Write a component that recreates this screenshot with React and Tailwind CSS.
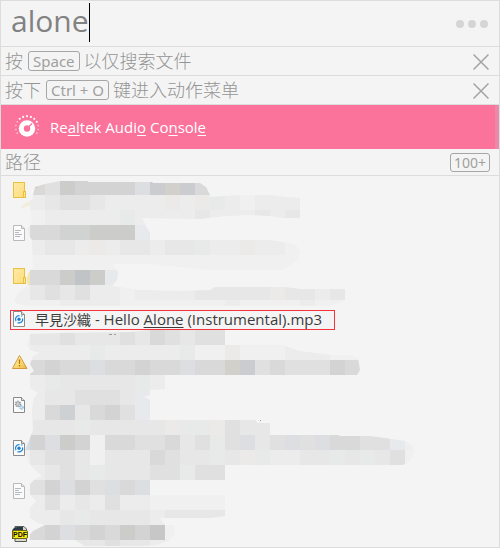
import React from "react";

const SHADES = {
  a: "#f0f0f0",
  b: "#ececec",
  c: "#e7e7e7",
  d: "#e0e0e0",
  e: "#d9d9d9",
  f: "#d3d3d3",
  g: "#cccccb",
  h: "#c7c7c8",
  B: "#e7eae9",
  W: "#ebeae8",
  P: "#dcdee1",
  Q: "#e7e9ec",
  M: "#d0d3d1",
  L: "#cacccf",
  N: "#c1c4c7",
  Y: "#d2d0cb",
  S: "#cdd1d4",
};

const CELL = 15;

// One entry per band of 15px tiles: [top, shades from x = 30]
const TILES = [
  [180, "edgffffPLYLe"],
  [195, "bcddcbbbbWbWBbabbb"],
  [210, "abbbbbBbbbbcbbbcbc"],
  [225, "eeMMgggQ"],
  [240, "bccbWbccbccBbbWbba"],
  [255, "aaaaaaaaaaaaaaaaaa"],
  [270, "eegNgQaa"],
  [285, "cdcdbbabbbbcccccWccbc"],
  [300, "aabbbbaaaaaaabaaaabaa"],
  [330, "ccdcccdcedcdd"],
  [345, "bbbbBbbbbbBaaWaaabbbaa"],
  [360, "efeePeefeePeeYLdedddfe"],
  [375, "bBcccccBbaaaa"],
  [390, "bccdddcQ"],
  [405, "beScefdQ"],
  [420, "cccBcccccWBBWdcc"],
  [435, "fPgfaeeddecdBdPcdPdPeeddQ"],
  [450, "cddcacccedccBcWBbbccBcBcda"],
  [465, "bcdcBcccddBdd"],
  [480, "dfPfdPePa"],
  [495, "bdbcbdbbaaaaa"],
  [510, "bbcBccccbcccc"],
  [525, "efPefegfha"],
  [540, "aaaccdccbb"],
];

// Outlines of the brushed areas
const STROKES = [
  "M33 195 35 187 45 184 60 181 88 181 88 182 152 182 153 183 200 183 206 187 210 195 210 197 240 195 270 195 285 197 300 198 300 218 283 218 270 216 250 215 225 216 200 219 142 218 146 226 150 233 150 240 269 240 283 242 296 245 300 252 298 260 286 268 280 270 210 270 150 264 112 264 118 272 117 280 112 286 120 287 138 290 180 291 210 290 215 287 285 287 300 289 345 289 345 300 330 306 30 306 17 304 14 300 18 293 28 285 26 280 29 272 33 267 32 240 28 234 27 228 32 224 30 205 21 209 22 205 33 199Z",
  "M30 334 60 333 130 332 150 330 225 330 225 345 281 345 300 351 330 355 350 355 358 358 360 370 357 375 165 375 165 389 150 390 150 395 144 397 150 400 150 420 255 420 257 423 270 423 270 435 338 435 340 436 370 436 385 438 405 441 412 445 415 452 410 461 403 465 225 465 225 480 150 480 150 495 225 495 225 516 210 518 160 518 165 525 174 525 175 534 170 540 157 545 140 546 85 546 75 540 30 540 28 537 33 531 45 525 38 523 30 518 30 508 36 501 30 494 30 484 35 479 42 476 33 468 27 461 25 450 30 438 33 430 32 410 34 398 38 393 30 388 30 374 34 371 30 364 33 356 40 353 30 350 27 345Z",
];

function Mosaic() {
  return (
    <svg
      className="pointer-events-none absolute left-0 top-0"
      width="420"
      height="371"
      viewBox="1 176 420 371"
      shapeRendering="crispEdges"
      aria-hidden="true"
    >
      <clipPath id="brushed">
        {STROKES.map((d) => (
          <path key={d} d={d} />
        ))}
      </clipPath>
      <g clipPath="url(#brushed)">
        <path d={STROKES.join("")} fill="#efefef" />
        {TILES.map(([y, shades]) =>
          shades
            .split("")
            .map((s, i) => (
              <rect key={`${y}-${i}`} x={30 + i * CELL} y={y} width={CELL} height={CELL} fill={SHADES[s]} />
            ))
        )}
        <path d="M21 209 22 205 30 201V209Z" fill="#f2eedb" />
        <path d="M26 272H30V285H27Z" fill="#f6e6ae" />
        <path d="M25 450 30 437V450Z" fill="#d3dee8" />
      </g>
      <path d="M36 187h1v1h-1z" fill="#f2a46c" />
      <path d="M109 334h3v1h-3zM114 334h2v1h-2zM260 420h1v1h-1z" fill="#9a9a9a" />
    </svg>
  );
}

function FolderIcon() {
  return (
    <svg width="16" height="16" viewBox="0 0 16 16" aria-hidden="true">
      <defs>
        <linearGradient id="folder" x1="0" y1="0" x2="1" y2="1">
          <stop offset="0" stopColor="#ffeaa6" />
          <stop offset="1" stopColor="#fddc7c" />
        </linearGradient>
      </defs>
      <rect x="1.5" y=".5" width="11" height="15" fill="url(#folder)" stroke="#e8c140" />
      <rect x="11.5" y="9.500" width="2" height="6" fill="#ffe28a" stroke="#e8c140" />
    </svg>
  );
}

function Page({ stroke = "#8a8a8a", children }) {
  return (
    <svg width="16" height="16" viewBox="0 0 16 16" aria-hidden="true">
      <path d="M1.5.5H9.500L12.500 3.500V15.500H1.500Z" fill="#fbfbfb" stroke={stroke} />
      <path d="M9.500.5V3.500H12.500" fill="#e4e4e4" stroke={stroke} />
      {children}
    </svg>
  );
}

function TextIcon() {
  return (
    <Page stroke="#b9b9bb">
      <path d="M3 5.500H9M3 7.500H7M3 9.500H10M3 11.500H8" stroke="#b4b8bf" />
    </Page>
  );
}

function MediaIcon() {
  return (
    <Page>
      <path d="M7.500 4.600A3.700 3.700 0 0 0 4 10.200M5.500 11.600A3.700 3.700 0 0 0 10.600 7.300" fill="none" stroke="#1a84dc" strokeWidth="1.200" />
      <circle cx="7" cy="8.300" r="1.700" fill="#1a7fd8" />
      <path d="M9 5.200 10.500 4.800" stroke="#1a84dc" />
    </Page>
  );
}

function GearIcon() {
  return (
    <Page>
      <circle cx="6" cy="7" r="2.400" fill="#eee" stroke="#8e979e" strokeWidth="1.800" strokeDasharray="1.300 .6" />
      <circle cx="6" cy="7" r="1.100" fill="#fff" stroke="#8e979e" strokeWidth=".6" />
      <circle cx="9.500" cy="10.500" r="1.600" fill="#dceef9" stroke="#85b8d8" strokeWidth="1.400" strokeDasharray="1.100 .5" />
    </Page>
  );
}

function WarningIcon() {
  return (
    <svg width="16" height="16" viewBox="0 0 16 16" aria-hidden="true">
      <defs>
        <linearGradient id="warn" x1="0" y1="0" x2="1" y2="1">
          <stop offset="0" stopColor="#fff6c4" />
          <stop offset=".6" stopColor="#f9d869" />
          <stop offset="1" stopColor="#edb04a" />
        </linearGradient>
      </defs>
      <path d="M7.500 1.500 15 14.500H.5Z" fill="url(#warn)" stroke="#d39a3c" strokeLinejoin="round" />
      <path d="M6.700 5.500H8.300L8 10H7ZM6.800 11H8.200V12.600H6.800Z" fill="#b5761c" />
    </svg>
  );
}

function PdfIcon() {
  return (
    <svg width="16" height="16" viewBox="0 0 16 16" aria-hidden="true">
      <path d="M3 .5H12L14.500 3V15.500H3Z" fill="#d8d8cf" stroke="#5b5b55" />
      <path d="M0 5Q1 1 6 1H11V4H4L2 13H0Z" fill="#2a3a48" />
      <rect x=".5" y="4.500" width="15" height="8" rx="1.500" fill="#f7ea17" stroke="#6e6812" />
      <text x="8" y="11" textAnchor="middle" className="font-['Liberation_Sans',sans-serif] text-[7px] font-bold" fill="#111">
        PDF
      </text>
    </svg>
  );
}

function DialIcon() {
  const dots = Array.from({ length: 13 }, (_, i) => {
    const t = ((150 + i * 20) * Math.PI) / 180;
    return [13 + 11.3 * Math.cos(t), 12.500 + 11.3 * Math.sin(t)];
  });
  return (
    <svg width="26" height="24" viewBox="0 0 26 24" aria-hidden="true">
      {dots.map(([x, y], i) => (
        <circle key={i} cx={x} cy={y} r={i > 3 && i < 10 ? 1.1 : 0.8} fill="#fff" opacity={i > 3 && i < 10 ? 0.95 : 0.65} />
      ))}
      <circle cx="13" cy="13.500" r="8.200" fill="#fff" />
      <circle cx="13" cy="13.500" r="3.200" fill="#fb729b" />
      <path d="M14 12.500 18 8.500" stroke="#fb729b" strokeWidth="1.300" />
    </svg>
  );
}

function Hit({ children }) {
  return <span className="underline decoration-1 underline-offset-2">{children}</span>;
}

function Key({ children }) {
  return (
    <kbd className="ml-[5px] mr-0.5 rounded-[3px] border border-[#a6a6a6] px-1 font-['Noto_Sans','Open_Sans',sans-serif] text-[15px] font-normal leading-[18px] text-[#a0a0a0]">
      {children}
    </kbd>
  );
}

function Hint({ children }) {
  return (
    <div className="flex h-[29px] items-center border-b border-[#dcdcdc] pl-1 pr-[10px] text-[18px] font-light text-[#949494]">
      <p className="flex flex-1 items-center whitespace-nowrap">{children}</p>
      <button type="button" aria-label="关闭" className="mt-0.5 block">
        <svg width="16" height="16" viewBox="0 0 16 16" className="block" aria-hidden="true">
          <path d="M.5.500 15.500 15.500M15.500.500.500 15.500" stroke="#a3a3a3" strokeWidth="1.500" />
        </svg>
      </button>
    </div>
  );
}

const RESULTS = [
  FolderIcon,
  TextIcon,
  FolderIcon,
  MediaIcon,
  WarningIcon,
  GearIcon,
  MediaIcon,
  TextIcon,
  PdfIcon,
];

export default function App() {
  return (
    <main className="border border-[#dcdcdc] bg-[#f4f4f4] font-['Open_Sans','Noto_Sans_CJK_SC',sans-serif]">
      <header className="flex h-[46px] items-center border-b border-[#dcdcdc] pl-[10px] pr-[11px]">
        <input
          aria-label="搜索"
          defaultValue="alone"
          className="mb-1.5 h-9 min-w-0 bg-transparent text-[30px] leading-9 text-[#828282] outline-none field-sizing-content"
        />
        <span className="mb-[3px] h-[39px] w-px bg-black" />
        <button type="button" aria-label="更多" className="ml-auto flex gap-1">
          <span className="size-2 rounded-full bg-[#d5d5d5]" />
          <span className="size-2 rounded-full bg-[#d5d5d5]" />
          <span className="size-2 rounded-full bg-[#d5d5d5]" />
        </button>
      </header>

      <Hint>
        按<Key>Space</Key>
        <span className="ml-0.5">以仅搜索文件</span>
      </Hint>
      <Hint>
        按下<Key>Ctrl + O</Key>
        <span className="ml-0.5">键进入动作菜单</span>
      </Hint>

      <button
        type="button"
        className="flex h-11 w-full items-center border-r-4 border-[#ea89a8] bg-[#fb729b] pl-[13px] text-left text-[15px] text-white"
      >
        <DialIcon />
        <span className="ml-[10px] whitespace-pre">
          Re<Hit>al</Hit>tek Audi<Hit>o</Hit> Co<Hit>n</Hit>sol<Hit>e</Hit>
        </span>
      </button>

      <div className="flex h-[27px] items-center justify-between border-b border-[#dcdcdc] pl-1 pr-[9px] text-[#949494]">
        <h2 className="text-[18px] font-light leading-[26px]">路径</h2>
        <span className="rounded-[3px] border border-[#a6a6a6] px-[3px] font-['Noto_Sans',sans-serif] text-[14px] leading-[17px] text-[#a0a0a0]">
          100+
        </span>
      </div>

      <ul className="relative flex flex-col gap-[27px] pb-[5px] pl-[11px] pt-[6px]">
        <Mosaic />
        {RESULTS.map((Icon, i) => (
          <li key={i} className="relative flex h-4 items-center gap-[7px]">
            <Icon />
            {i === 3 && (
              <>
                <span className="whitespace-nowrap text-[15px] leading-5 text-[#3c3c3c]">
                  <span className="font-['Noto_Sans_CJK_JP',sans-serif] text-[14px] leading-none">早見沙織</span> - Hello{" "}
                  <Hit>Alone</Hit> (Instrumental).mp3
                </span>
                <span className="absolute -left-[2px] -top-px h-5 w-[325px] border border-[#f5333c]" />
              </>
            )}
          </li>
        ))}
      </ul>
    </main>
  );
}
